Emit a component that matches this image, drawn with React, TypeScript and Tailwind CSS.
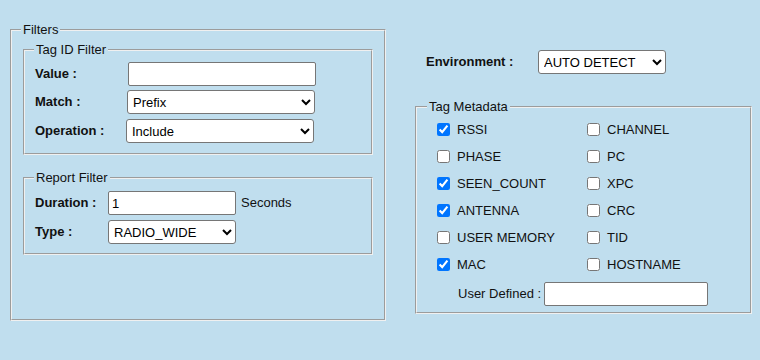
import React from "react";

const fieldset = "border-2 border-[#f0f0f0] [border-style:groove]";
const legend = "px-[2px] leading-[15px]";
const inputCls =
  "h-[24px] bg-white border border-[#767676] rounded-[2px] px-[3px] text-[13px] text-black outline-none";
const selectCls =
  "h-[24px] bg-white border border-[#767676] rounded-[3px] pl-[1px] text-[13px] text-black";

const meta: [string, boolean, string, boolean][] = [
  ["RSSI", true, "CHANNEL", false],
  ["PHASE", false, "PC", false],
  ["SEEN_COUNT", true, "XPC", false],
  ["ANTENNA", true, "CRC", false],
  ["USER MEMORY", false, "TID", false],
  ["MAC", true, "HOSTNAME", false],
];

const Check = ({ label, checked }: { label: string; checked: boolean }) => (
  <label className="flex items-center h-[27px]">
    <input type="checkbox" defaultChecked={checked} className="w-[13px] h-[13px]" />
    <span className="ml-[7px]">{label}</span>
  </label>
);

const App = () => {
  return (
    <div
      className="w-full h-[360px] bg-[#c0deee] text-[13px] text-[#111] flex items-start"
      style={{ fontFamily: '"Liberation Sans", Arial, sans-serif' }}
    >
      {/* left column */}
      <fieldset className={`${fieldset} ml-[10px] mt-[22px] w-[376px] h-[299px] px-[9px] pt-[5px]`}>
        <legend className={legend}>Filters</legend>

        <fieldset className={`${fieldset} mx-[2px] px-[9px] pt-[5px] pb-[10px]`}>
          <legend className={legend}>Tag ID Filter</legend>
          <div className="flex flex-col gap-[4px] pl-[1px]">
            <div className="flex items-center">
              <span className="w-[93px] font-bold">Value :</span>
              <input type="text" className={`${inputCls} w-[188px] h-[23px]`} />
            </div>
            <div className="flex items-center">
              <span className="w-[92px] font-bold">Match :</span>
              <select className={`${selectCls} w-[188px]`} defaultValue="Prefix">
                <option>Prefix</option>
                <option>Suffix</option>
                <option>Exact</option>
              </select>
            </div>
            <div className="flex items-center mt-[1px]">
              <span className="w-[91px] font-bold">Operation :</span>
              <select className={`${selectCls} w-[188px]`} defaultValue="Include">
                <option>Include</option>
                <option>Exclude</option>
              </select>
            </div>
          </div>
        </fieldset>

        <fieldset className={`${fieldset} mx-[2px] mt-[15px] px-[9px] pt-[6px] pb-[9px]`}>
          <legend className={legend}>Report Filter</legend>
          <div className="flex flex-col gap-[5px] pl-[1px]">
            <div className="flex items-center">
              <span className="w-[73px] font-bold">Duration :</span>
              <input type="text" defaultValue="1" className={`${inputCls} w-[128px] h-[23px]`} />
              <span className="ml-[5px]">Seconds</span>
            </div>
            <div className="flex items-center">
              <span className="w-[73px] font-bold">Type :</span>
              <select className={`${selectCls} w-[128px]`} defaultValue="RADIO_WIDE">
                <option>RADIO_WIDE</option>
                <option>PER_ANTENNA</option>
              </select>
            </div>
          </div>
        </fieldset>
      </fieldset>

      {/* right column */}
      <div className="ml-[29px] mt-[50px] w-[337px]">
        <div className="flex items-center pl-[11px]">
          <span className="w-[112px] font-bold">Environment :</span>
          <select className={`${selectCls} w-[128px]`} defaultValue="AUTO DETECT">
            <option>AUTO DETECT</option>
            <option>HIGH DENSITY</option>
            <option>LOW DENSITY</option>
          </select>
        </div>

        <fieldset className={`${fieldset} mt-[25px] h-[215px] px-[10px] pt-[2px]`}>
          <legend className={legend}>Tag Metadata</legend>
          <div className="grid grid-cols-[150px_1fr] pl-[10px]">
            {meta.map(([a, ac, b, bc]) => (
              <React.Fragment key={a}>
                <Check label={a} checked={ac} />
                <Check label={b} checked={bc} />
              </React.Fragment>
            ))}
          </div>
          <div className="flex items-center pl-[31px] mt-[4px]">
            <span>User Defined :</span>
            <input type="text" className={`${inputCls} ml-[3px] w-[164px] h-[21px]`} />
          </div>
        </fieldset>
      </div>
    </div>
  );
};

export default App;
